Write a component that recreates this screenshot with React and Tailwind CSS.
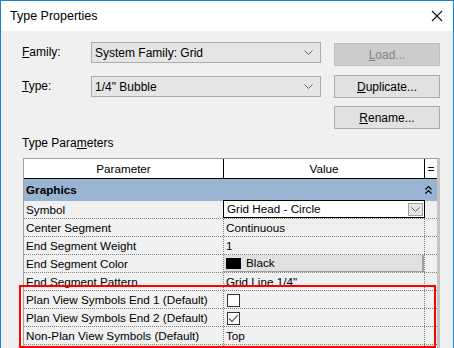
import React from 'react';

const Chevron = ({ className = '' }) => (
  <svg width="9" height="5" viewBox="0 0 9 5" className={className}>
    <path d="M0.5 0.5 L4.5 4.5 L8.5 0.5" fill="none" stroke="#606060" strokeWidth="1" />
  </svg>
);

const Combo = ({ text, className = '' }) => (
  <div className={`flex items-center justify-between w-[230px] h-[21px] border border-[#acacac] bg-[#e5e5e5] pl-[3px] pr-[7px] ${className}`}>
    <span>{text}</span>
    <Chevron />
  </div>
);

const Button = ({ children, disabled, className = '' }) => (
  <div
    className={`flex items-center justify-center w-[106px] h-[23px] border ${
      disabled ? 'bg-[#cccccc] border-[#bfbfbf] text-[#838383]' : 'bg-[#e1e1e1] border-[#adadad] text-black'
    } ${className}`}
  >
    {children}
  </div>
);

const Row = ({ name, children }) => (
  <div className="grid grid-cols-[200px_201px_12px] h-[18px] border-b border-dotted border-[#808080]">
    <div className="pl-[2px] leading-[17px] border-r border-dotted border-[#808080] whitespace-nowrap">{name}</div>
    <div className="relative border-r border-dotted border-[#808080]">{children}</div>
    <div />
  </div>
);

const Checkbox = ({ checked }) => (
  <div className="ml-[3px] mt-[3px] w-[13px] h-[13px] border border-[#333] bg-white flex items-center justify-center">
    {checked && (
      <svg width="11" height="9" viewBox="0 0 11 9">
        <path d="M1 4.5 L4 7.5 L10 1" fill="none" stroke="#6a6a6a" strokeWidth="1.3" />
      </svg>
    )}
  </div>
);

export default function App() {
  const params = [
    { name: 'Center Segment', value: 'Continuous' },
    { name: 'End Segment Weight', value: '1' },
  ];

  return (
    <div className="relative w-[454px] h-[348px] overflow-hidden bg-[#f0f0f0] border-x border-t border-[#1883d7] font-['Liberation_Sans',Arial,sans-serif] text-[12px] text-black">
      {/* title bar */}
      <div className="flex items-center justify-between h-[30px] bg-white pl-[9px] pr-[10px]">
        <span className="text-[12.5px]">Type Properties</span>
        <svg width="12" height="12" viewBox="0 0 12 12">
          <path d="M1 1 L11 11 M11 1 L1 11" stroke="#111" strokeWidth="1.1" />
        </svg>
      </div>

      <div className="pl-[21px] pt-[11px]">
        <div className="flex items-start">
          <div className="w-[69px] h-[21px] leading-[21px]"><u>F</u>amily:</div>
          <Combo text="System Family: Grid" />
          <Button disabled className="ml-[13px] mt-[1px] h-[22px]"><span><u>L</u>oad...</span></Button>
        </div>
        <div className="flex items-start mt-[9px]">
          <div className="w-[69px] h-[21px] mt-[1px] leading-[21px]"><u>T</u>ype:</div>
          <Combo text={'1/4" Bubble'} className="mt-[1px]" />
          <Button className="ml-[13px]"><span><u>D</u>uplicate...</span></Button>
        </div>
        <div className="flex mt-[8px]">
          <Button className="ml-[312px]"><span><u>R</u>ename...</span></Button>
        </div>

        <div className="mt-[6px] h-[16px] leading-[16px]">Type Para<u>m</u>eters</div>

        {/* parameters table */}
        <div className="mt-[7px] ml-[1px] w-[417px] text-[11.7px] border-l border-t border-[#a0a0a0] border-r-[3px] border-r-[#c4c4c4]">
          <div className="grid grid-cols-[200px_201px_12px] h-[20px] border-b border-black bg-white">
            <div className="flex items-center justify-center border-r border-black">Parameter</div>
            <div className="flex items-center justify-center border-r border-black">Value</div>
            <div className="flex items-center justify-center">=</div>
          </div>
          <div className="flex items-center justify-between h-[22px] bg-[#99b4d1] pl-[2px] pr-[5px]">
            <span className="font-bold">Graphics</span>
            <svg width="7" height="8" viewBox="0 0 7 8">
              <path d="M0.5 3.5 L3.5 0.5 L6.5 3.5 M0.5 7.5 L3.5 4.5 L6.5 7.5" fill="none" stroke="#000" strokeWidth="1.2" />
            </svg>
          </div>
          <Row name="Symbol">
            <div className="absolute -left-[1px] -top-[1px] -right-[1px] bottom-0 border border-black bg-white flex items-center justify-between pl-[3px] pr-[1px]">
              <span className="leading-[16px]">Grid Head - Circle</span>
              <div className="w-[15px] h-[13px] bg-[#e6e6e6] border border-[#a0a0a0] flex items-center justify-center">
                <Chevron />
              </div>
            </div>
          </Row>
          {params.map((p) => (
            <Row key={p.name} name={p.name}>
              <div className="pl-[2px] leading-[17px]">{p.value}</div>
            </Row>
          ))}
          <Row name="End Segment Color">
            <div className="h-[17px] bg-[#e1e1e1] border-r-[2px] border-b border-[#a0a0a0] flex items-center pl-[2px]">
              <div className="w-[15px] h-[11px] bg-black" />
              <span className="ml-[5px]">Black</span>
            </div>
          </Row>
          <Row name="End Segment Pattern">
            <div className="pl-[2px] leading-[17px]">Grid Line 1/4"</div>
          </Row>
          <Row name="Plan View Symbols End 1 (Default)">
            <Checkbox />
          </Row>
          <Row name="Plan View Symbols End 2 (Default)">
            <Checkbox checked />
          </Row>
          <Row name="Non-Plan View Symbols (Default)">
            <div className="pl-[2px] leading-[17px]">Top</div>
          </Row>
          <Row name="" />
        </div>
      </div>

      {/* red annotation box */}
      <div className="absolute left-[18px] top-[284px] w-[417px] h-[63px] border-2 border-[#ff0000]" />
    </div>
  );
}
